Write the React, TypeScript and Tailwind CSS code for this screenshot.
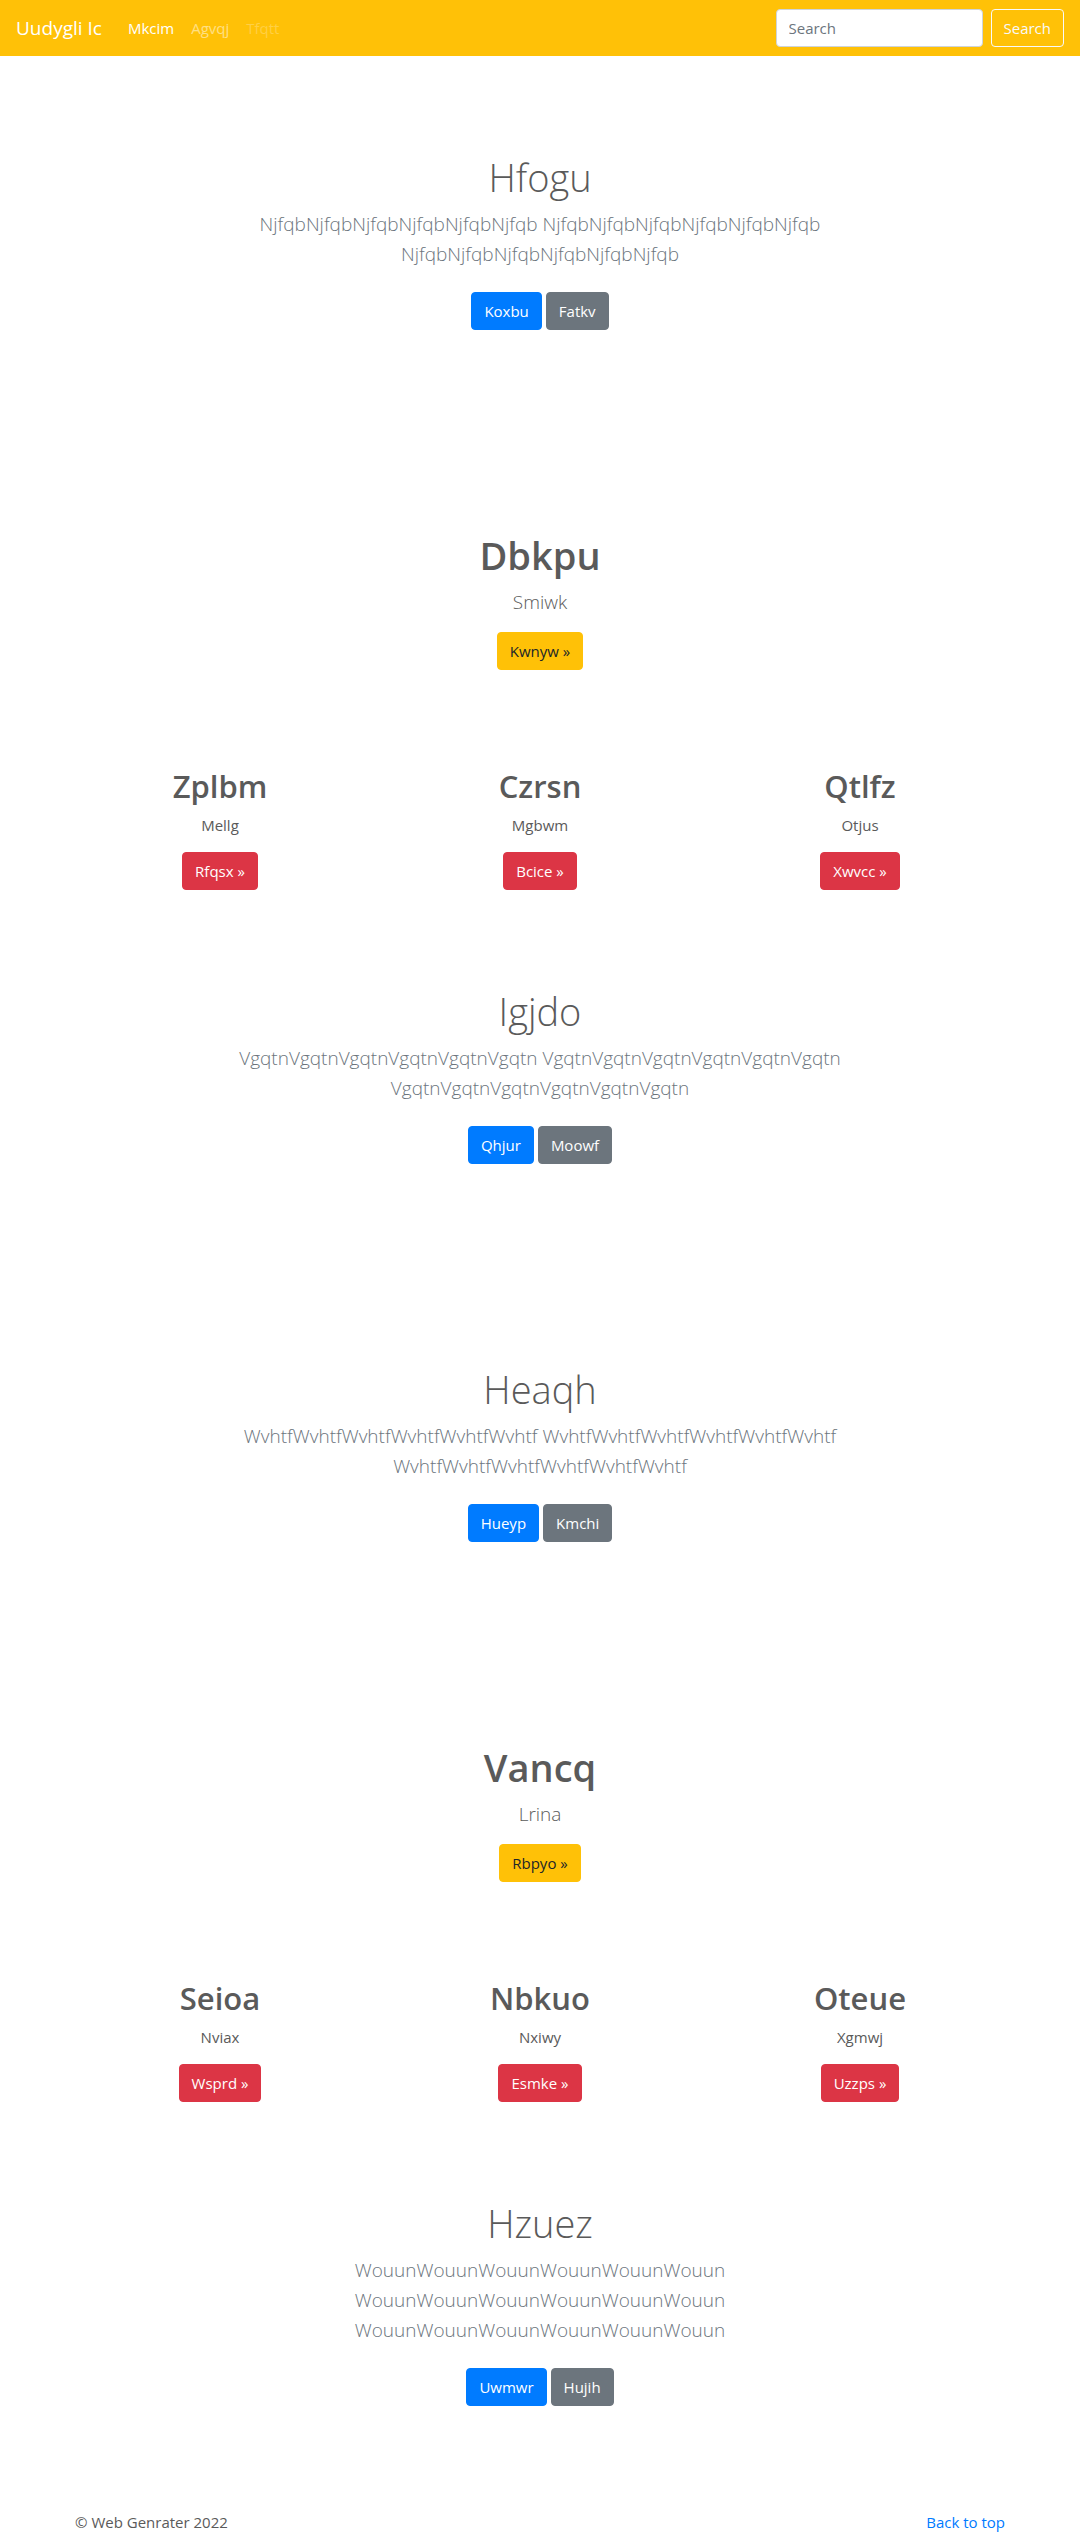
import { useState } from "react";
import type { ReactNode } from "react";

const tones = {
  primary: "border-[#007bff] bg-[#007bff] text-white",
  secondary: "border-[#6c757d] bg-[#6c757d] text-white",
  warning: "border-[#ffc107] bg-[#ffc107] text-[#212529]",
  danger: "border-[#dc3545] bg-[#dc3545] text-white",
};

function ButtonLink({ tone, children }: { tone: keyof typeof tones; children: ReactNode }) {
  return (
    <a
      href="#"
      className={`inline-block rounded border px-3 py-[6px] text-[15px] leading-6 ${tones[tone]}`}
    >
      {children}
    </a>
  );
}

type HeroProps = { title: string; word: string; primary: string; secondary: string };

function Hero({ title, word, primary, secondary }: HeroProps) {
  const text = word.repeat(6);
  return (
    <section className="px-4 py-24 text-center">
      <div className="mx-auto max-w-[620px]">
        <h1 className="mb-[7px] text-[38px] leading-[50px] font-light">{title}</h1>
        <p className="mb-[15px] text-[19px] leading-[30px] font-light text-[#6c757d]">
          {text} {text} {text}
        </p>
        <div className="flex justify-center gap-1 py-2">
          <ButtonLink tone="primary">{primary}</ButtonLink>
          <ButtonLink tone="secondary">{secondary}</ButtonLink>
        </div>
      </div>
    </section>
  );
}

type FeatureProps = { title: string; text: string; action: string };

function Feature({ title, text, action }: FeatureProps) {
  return (
    <section className="px-4 pt-24 text-center">
      <h1 className="mb-[7px] text-[38px] leading-[50px] font-semibold">{title}</h1>
      <p className="mb-[15px] text-[19px] leading-[30px] font-light">{text}</p>
      <ButtonLink tone="warning">{action} »</ButtonLink>
    </section>
  );
}

function Columns({ items }: { items: FeatureProps[] }) {
  return (
    <section className="mx-auto grid max-w-[960px] grid-cols-3 pt-24 text-center">
      {items.map((item) => (
        <div key={item.title} className="px-4">
          <h2 className="mb-[7px] text-[31px] leading-[40px] font-semibold">{item.title}</h2>
          <p className="mb-[15px] text-[15px] leading-6">{item.text}</p>
          <ButtonLink tone="danger">{item.action} »</ButtonLink>
        </div>
      ))}
    </section>
  );
}

function Navbar() {
  const [query, setQuery] = useState("");
  return (
    <header className="flex h-14 items-center bg-[#ffc107] px-4">
      <a href="#" className="mr-[18px] text-[19px] leading-[30px] text-white">
        Uudygli Ic
      </a>
      <nav className="flex gap-px text-[15px] leading-6">
        <a href="#" className="p-2 text-white">
          Mkcim
        </a>
        <a href="#" className="p-2 text-white/50">
          Agvqj
        </a>
        <a href="#" aria-disabled="true" className="p-2 text-white/25">
          Tfqtt
        </a>
      </nav>
      <form className="ml-auto flex gap-2" onSubmit={(e) => e.preventDefault()}>
        <input
          type="search"
          aria-label="Search"
          placeholder="Search"
          value={query}
          onChange={(e) => setQuery(e.target.value)}
          className="h-[38px] w-[207px] rounded border border-[#ced4da] bg-white px-3 text-[15px] text-[#495057] placeholder:text-[#6c757d]"
        />
        <button
          type="submit"
          className="h-[38px] rounded border border-[#f8f9fa] px-3 text-[15px] leading-6 text-[#f8f9fa]"
        >
          Search
        </button>
      </form>
    </header>
  );
}

export default function App() {
  return (
    <div className="bg-white font-['Segoe_UI','Open_Sans',sans-serif] text-[#5a5a5a]">
      <Navbar />
      <main>
        <Hero title="Hfogu" word="Njfqb" primary="Koxbu" secondary="Fatkv" />
        <Feature title="Dbkpu" text="Smiwk" action="Kwnyw" />
        <Columns
          items={[
            { title: "Zplbm", text: "Mellg", action: "Rfqsx" },
            { title: "Czrsn", text: "Mgbwm", action: "Bcice" },
            { title: "Qtlfz", text: "Otjus", action: "Xwvcc" },
          ]}
        />
        <Hero title="Igjdo" word="Vgqtn" primary="Qhjur" secondary="Moowf" />
        <Hero title="Heaqh" word="Wvhtf" primary="Hueyp" secondary="Kmchi" />
        <Feature title="Vancq" text="Lrina" action="Rbpyo" />
        <Columns
          items={[
            { title: "Seioa", text: "Nviax", action: "Wsprd" },
            { title: "Nbkuo", text: "Nxiwy", action: "Esmke" },
            { title: "Oteue", text: "Xgmwj", action: "Uzzps" },
          ]}
        />
        <Hero title="Hzuez" word="Wouun" primary="Uwmwr" secondary="Hujih" />
      </main>
      <footer className="mx-auto flex max-w-[960px] justify-between px-[15px] text-[15px] leading-6">
        <p>© Web Genrater 2022</p>
        <a href="#" className="text-[#007bff]">
          Back to top
        </a>
      </footer>
    </div>
  );
}
